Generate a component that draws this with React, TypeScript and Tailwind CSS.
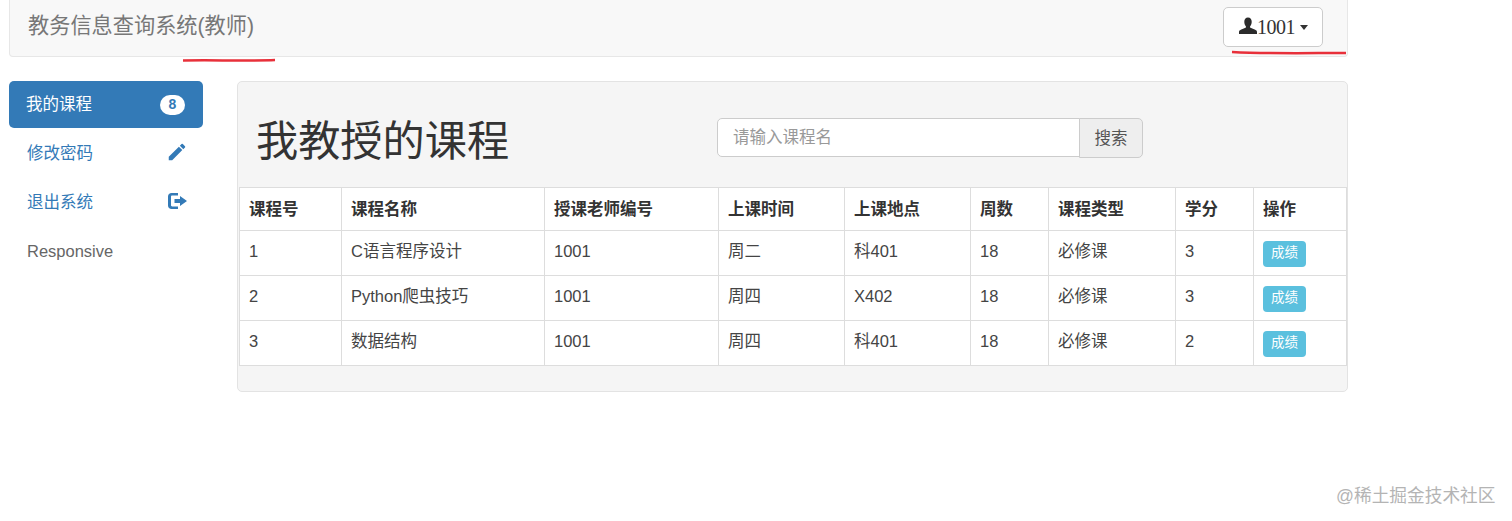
import { MdEdit } from 'react-icons/md'

const font = "font-['Liberation_Sans','Noto_Sans_CJK_SC',sans-serif]"

const courses = [
  { id: '1', name: 'C语言程序设计', teacher: '1001', time: '周二', place: '科401', weeks: '18', type: '必修课', credit: '3' },
  { id: '2', name: 'Python爬虫技巧', teacher: '1001', time: '周四', place: 'X402', weeks: '18', type: '必修课', credit: '3' },
  { id: '3', name: '数据结构', teacher: '1001', time: '周四', place: '科401', weeks: '18', type: '必修课', credit: '2' },
]

const headers = ['课程号', '课程名称', '授课老师编号', '上课时间', '上课地点', '周数', '课程类型', '学分', '操作']
const colWidths = ['w-[102px]', 'w-[203px]', 'w-[174px]', 'w-[126px]', 'w-[126px]', 'w-[78px]', 'w-[127px]', 'w-[78px]', 'w-[93px]']

function UserIcon() {
  return (
    <svg width="18" height="18" viewBox="0 0 17 17" className="mt-[-2px] shrink-0">
      <path
        fill="#2b2b2b"
        d="M8.500 0.500c2.300 0 3.500 1.700 3.500 4 0 1.700-.5 3.200-1.400 4.200-.4.500-.3 1.200.3 1.500l4.400 1.900c1 .5 1.700 1 1.700 2.100V16H0v-1.800c0-1.100.7-1.600 1.700-2.100l4.400-1.900c.6-.3.700-1 .3-1.500-.9-1-1.400-2.500-1.400-4.200 0-2.300 1.200-4 3.500-4z"
      />
    </svg>
  )
}

function LogoutIcon() {
  return (
    <svg width="19" height="16" viewBox="0 0 19 16" className="mt-[-3px]">
      <path fill="#337ab7" d="M3.500 0H10v2.600H4.200c-.7 0-1.200.5-1.200 1.200v8.400c0 .7.500 1.200 1.200 1.200H10V16H3.500C1.500 16 0 14.500 0 12.500v-9C0 1.500 1.500 0 3.500 0z" />
      <path fill="#337ab7" d="M12 3l7 5-7 5v-3H6.500V6H12z" />
    </svg>
  )
}

function SideItem({ label, muted, children }: { label: string; muted?: boolean; children?: React.ReactNode }) {
  return (
    <div className={`flex h-[49px] items-center justify-between pl-[18px] pr-[16px] text-[16.5px] ${muted ? 'text-[#666]' : 'text-[#337ab7]'}`}>
      <span>{label}</span>
      {children}
    </div>
  )
}

export default function App() {
  return (
    <div className={`${font} relative h-[521px] w-[1512px] overflow-hidden bg-white text-[#333]`}>
      {/* Navbar */}
      <div className="ml-[9px] flex h-[57px] w-[1339px] items-center justify-between rounded-b-[4px] border border-t-0 border-[#e7e7e7] bg-[#f8f8f8] pl-[18px] pr-[24px]">
        <span className="mt-[-4px] text-[21.2px] text-[#777]">教务信息查询系统(教师)</span>
        <button className="mt-[-3px] flex h-[40px] w-[100px] items-center justify-center rounded-[5px] border border-[#ccc] bg-white pl-[1px] font-['Liberation_Serif','Noto_Sans_CJK_SC',serif] text-[20px] text-[#333]">
          <UserIcon />
          <span className="tracking-[-0.5px]">1001</span>
          <span className="ml-[5px] mt-[1px] border-x-[4px] border-t-[5px] border-x-transparent border-t-[#333]" />
        </button>
      </div>

      <div className="mt-[24px] flex items-start">
        {/* Sidebar */}
        <div className="ml-[9px] w-[194px]">
          <div className="flex h-[47px] items-center justify-between rounded-[5px] bg-[#337ab7] pl-[17px] pr-[18px] text-[16.5px] text-white">
            <span>我的课程</span>
            <span className="flex h-[20px] w-[25px] items-center justify-center rounded-full bg-white text-[14px] font-bold text-[#337ab7]">8</span>
          </div>
          <div className="mt-[1px]">
            <SideItem label="修改密码">
              <MdEdit className="mt-[-3px] mr-[-1px] text-[22px] text-[#337ab7]" />
            </SideItem>
            <SideItem label="退出系统">
              <LogoutIcon />
            </SideItem>
            <SideItem label="Responsive" muted />
          </div>
        </div>

        {/* Jumbotron panel */}
        <div className="ml-[34px] h-[311px] w-[1111px] rounded-[5px] border border-[#e3e3e3] bg-[#f5f5f5] pl-[1px]">
          <div className="flex h-[105px] items-start pl-[17px]">
            <h1 className="mt-[30px] w-[461px] text-[42.2px] leading-[60px] font-normal text-[#333]">我教授的课程</h1>
            <div className="mt-[36px] flex h-[40px]">
              <div className="flex h-[39px] w-[363px] items-center rounded-l-[5px] border border-[#ccc] bg-white pl-[15px] text-[16.5px] text-[#999]">
                请输入课程名
              </div>
              <div className="ml-[-1px] flex h-[40px] w-[64px] items-center justify-center rounded-r-[5px] border border-[#ccc] bg-[#eee] text-[16.5px] text-[#555]">
                搜索
              </div>
            </div>
          </div>
          <table className="w-[1108px] table-fixed border-collapse bg-white text-[16.5px]">
            <colgroup>
              {colWidths.map((w, i) => (
                <col key={i} className={w} />
              ))}
            </colgroup>
            <thead>
              <tr className="h-[43px]">
                {headers.map((h) => (
                  <th key={h} className="border border-[#ddd] pl-[9px] text-left font-bold text-[#333]">
                    {h}
                  </th>
                ))}
              </tr>
            </thead>
            <tbody>
              {courses.map((c) => (
                <tr key={c.id} className="h-[45px]">
                  {[c.id, c.name, c.teacher, c.time, c.place, c.weeks, c.type, c.credit].map((v, i) => (
                    <td key={i} className="border border-[#ddd] pb-[3px] pl-[9px] text-[#444]">
                      {v}
                    </td>
                  ))}
                  <td className="border border-[#ddd] pl-[9px]">
                    <span className="mt-[1px] flex h-[26px] w-[43px] items-center justify-center rounded-[4px] bg-[#5bc0de] text-[13.5px] text-white">成绩</span>
                  </td>
                </tr>
              ))}
            </tbody>
          </table>
        </div>
      </div>

      {/* Red pen marks over the screenshot */}
      <svg className="pointer-events-none absolute left-0 top-0" width="1512" height="70">
        <path d="M183 60.500 C210 60 250 61 275 60" stroke="#e8303a" strokeWidth="2.500" fill="none" />
        <path d="M1232 52 C1270 54 1310 53 1346 53" stroke="#e8303a" strokeWidth="2.500" fill="none" />
      </svg>

      {/* Watermark */}
      <span className="absolute left-[1336px] top-[483px] text-[17.7px] text-[#b4b4b4]">@稀土掘金技术社区</span>
    </div>
  )
}
